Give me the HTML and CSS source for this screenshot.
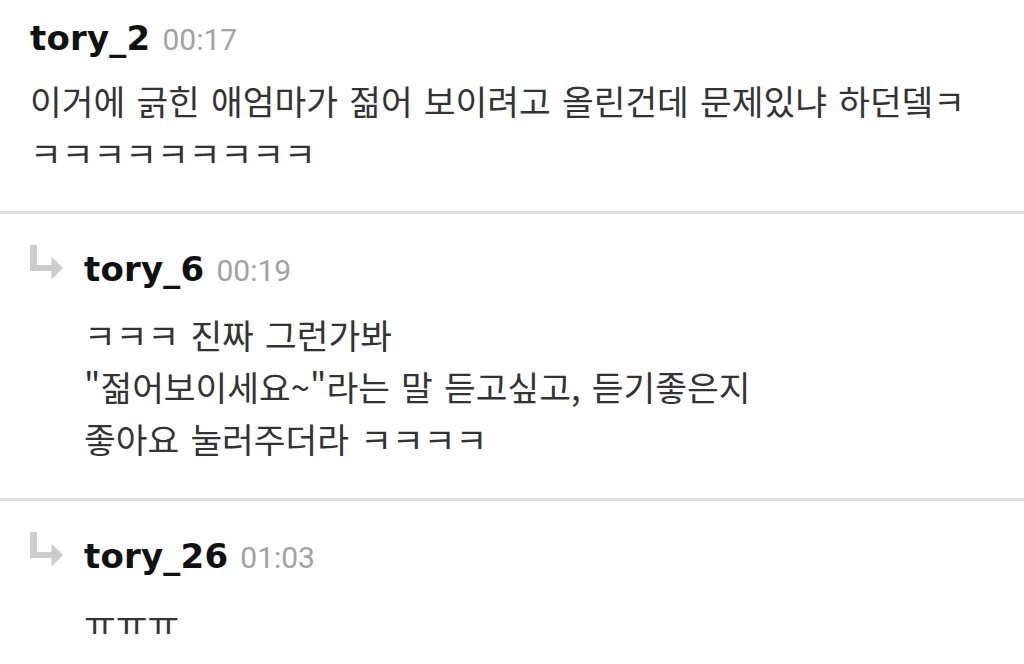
FILE: index.html
```html
<!DOCTYPE html>
<html lang="ko">
<head>
<meta charset="utf-8">
<link rel="stylesheet" href="styles.css">
</head>
<body>
<div class="list">
  <div class="comment">
    <div class="head"><span class="name">tory_2</span><span class="time">00:17</span></div>
    <div class="text">이거에 긁힌 애엄마가 젊어 보이려고 올린건데 문제있냐 하던뎈ㅋ<br>ㅋㅋㅋㅋㅋㅋㅋㅋㅋ</div>
  </div>
  <div class="comment reply">
    <svg class="arrow" viewBox="0 0 34 34" width="34" height="34"><path d="M0 0h7v20h14.5v-8.5l11.5 11.5-11.5 11.5v-8.5H0z" fill="#cccccc"/></svg>
    <div class="body">
      <div class="head"><span class="name">tory_6</span><span class="time">00:19</span></div>
      <div class="text">ㅋㅋㅋ 진짜 그런가봐<br>"젊어보이세요~"라는 말 듣고싶고, 듣기좋은지<br>좋아요 눌러주더라 ㅋㅋㅋㅋ</div>
    </div>
  </div>
  <div class="comment reply">
    <svg class="arrow" viewBox="0 0 34 34" width="34" height="34"><path d="M0 0h7v20h14.5v-8.5l11.5 11.5-11.5 11.5v-8.5H0z" fill="#cccccc"/></svg>
    <div class="body">
      <div class="head"><span class="name">tory_26</span><span class="time">01:03</span></div>
      <div class="text">ㅠㅠㅠ</div>
    </div>
  </div>
</div>
</body>
</html>
```

FILE: styles.css
```css
html, body {
  margin: 0;
  padding: 0;
  background: #fff;
}
body {
  width: 1024px;
  height: 664px;
  overflow: hidden;
  font-family: "Noto Sans CJK KR", "Noto Sans", sans-serif;
  color: #333;
}
.comment {
  padding: 2px 30px 33px;
  border-bottom: 3px solid #dedede;
}
.head {
  height: 72px;
  font-family: "DejaVu Sans", sans-serif;
  font-weight: 700;
  font-size: 34px;
  line-height: 72px;
  white-space: nowrap;
}
.name {
  color: #111;
  letter-spacing: 0.2px;
}
.time {
  margin-left: 12px;
  font-family: Roboto, "Noto Sans", sans-serif;
  font-weight: 400;
  font-size: 30px;
  color: #a2a2a2;
}
.text {
  font-size: 34.5px;
  line-height: 52px;
  word-spacing: 1.5px;
  color: #333;
}
.reply {
  display: flex;
  gap: 20px;
  padding-top: 19px;
  padding-bottom: 34px;
}
.reply .text {
  margin-top: 3px;
}
.arrow {
  flex: none;
  margin-top: 12px;
}
```
